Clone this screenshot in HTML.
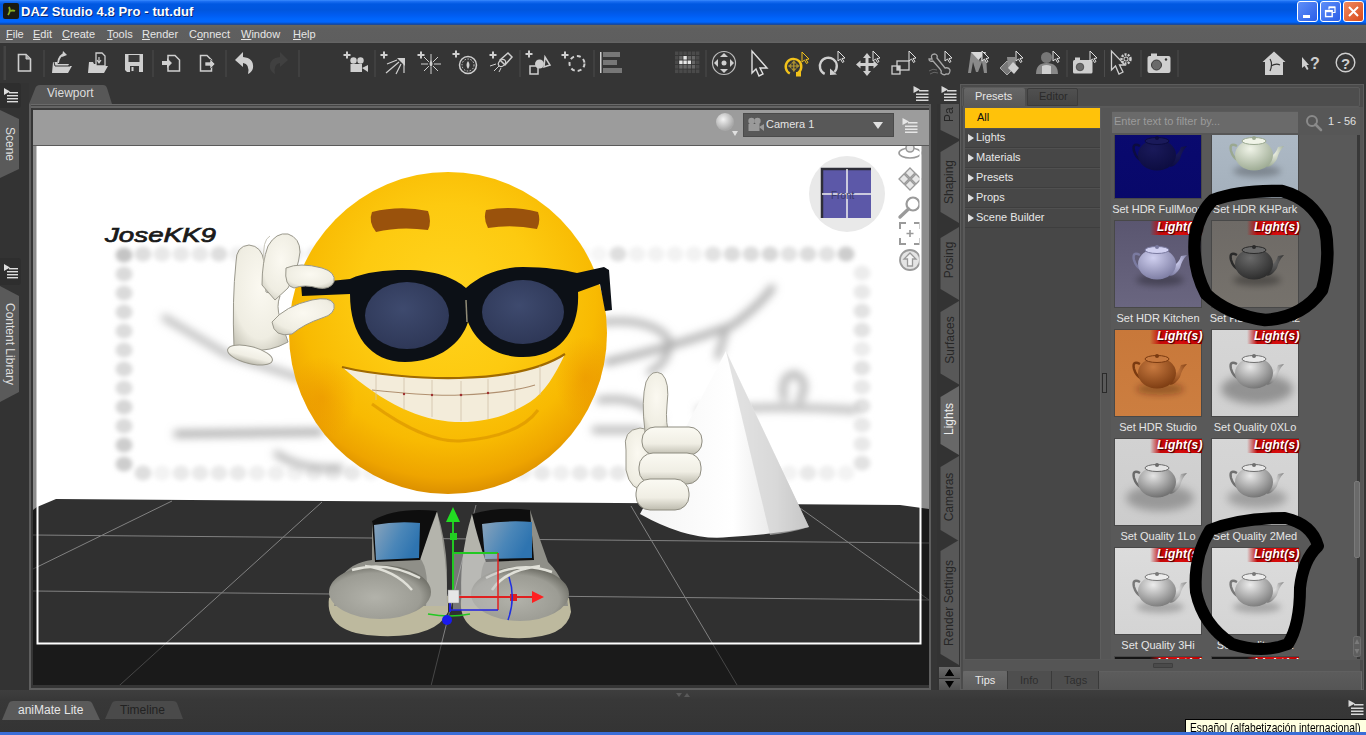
<!DOCTYPE html>
<html><head><meta charset="utf-8">
<style>
*{margin:0;padding:0;box-sizing:border-box}
html,body{width:1366px;height:735px;overflow:hidden;background:#353535;font-family:"Liberation Sans",sans-serif;position:relative}
.a{position:absolute}
#title{left:0;top:0;width:1366px;height:25px;background:linear-gradient(#3a8cff 0,#1a6ef2 1.5px,#0058e2 4px,#0056de 10px,#005cf0 15px,#0066fc 19px,#0066ff 22px,#0a4ab0 24px,#2a4a88 25px)}
#title .t{left:21px;top:4px;color:#fff;font-weight:bold;font-size:13px;letter-spacing:0.1px;text-shadow:1px 1px 0 #0a2a7a}
#menu{left:0;top:25px;width:1366px;height:18px;background:linear-gradient(#66665f,#5f5f5f 4px,#5e5e5e 16px,#666 18px)}
#menu span{position:absolute;top:3px;color:#e6e6e6;font-size:11px}
#menu span u{text-decoration:underline}
#tool{left:0;top:43px;width:1366px;height:40px;background:#353535}
.sep{position:absolute;top:51px;width:1px;height:26px;background:#4a4a4a}
.ic{position:absolute}
</style></head><body>
<div id="title" class="a">
  <svg class="a" style="left:3px;top:3px" width="16" height="16"><rect x="0" y="0" width="16" height="16" rx="2" fill="#1a1a14"/><path d="M6 4 Q8 8 5 12 M7 8 Q10 7 12 8" stroke="#8ab020" stroke-width="1.8" fill="none"/></svg>
  <div class="t a">DAZ Studio 4.8 Pro - tut.duf</div>
  <div class="a" style="left:1297px;top:1px;width:21px;height:21px;border:1px solid #fff;border-radius:3px;background:linear-gradient(135deg,#5f8ff8,#2a5ee8)"><div style="position:absolute;left:5px;top:13px;width:7px;height:3px;background:#fff"></div></div>
  <div class="a" style="left:1320px;top:1px;width:21px;height:21px;border:1px solid #fff;border-radius:3px;background:linear-gradient(135deg,#5f8ff8,#2a5ee8)"><svg width="19" height="19" style="position:absolute;left:0;top:0"><path d="M8 7.5 V5 H14 V10.5 H11.5" fill="none" stroke="#fff" stroke-width="1.2"/><rect x="8" y="4.6" width="6" height="1.6" fill="#fff"/><rect x="4.6" y="8.6" width="6.6" height="6" fill="none" stroke="#fff" stroke-width="1.4"/><rect x="4.6" y="8.4" width="6.6" height="1.8" fill="#fff"/></svg></div>
  <div class="a" style="left:1343px;top:1px;width:21px;height:21px;border:1px solid #fff;border-radius:3px;background:linear-gradient(135deg,#f08a60,#d84a1a)"><svg width="19" height="19" style="position:absolute;left:0;top:0"><path d="M5 5 L14 14 M14 5 L5 14" stroke="#fff" stroke-width="2"/></svg></div>
</div>
<div id="menu" class="a">
  <span style="left:6px"><u>F</u>ile</span><span style="left:33px"><u>E</u>dit</span><span style="left:62px"><u>C</u>reate</span><span style="left:107px"><u>T</u>ools</span><span style="left:142px"><u>R</u>ender</span><span style="left:189px">C<u>o</u>nnect</span><span style="left:241px"><u>W</u>indow</span><span style="left:293px"><u>H</u>elp</span>
</div>
<div id="tool" class="a"></div>
<svg class="a" style="left:0;top:43px" width="1366" height="40" viewBox="0 43 1366 40"><rect x="3.5" y="46" width="2.5" height="34" fill="#444"/><rect x="43.5" y="50" width="1" height="27" fill="#4c4c4c"/><rect x="152.5" y="50" width="1" height="27" fill="#4c4c4c"/><rect x="225.5" y="50" width="1" height="27" fill="#4c4c4c"/><rect x="298.5" y="50" width="1" height="27" fill="#4c4c4c"/><rect x="374.5" y="50" width="1" height="27" fill="#4c4c4c"/><rect x="519.5" y="50" width="1" height="27" fill="#4c4c4c"/><rect x="593.5" y="50" width="1" height="27" fill="#4c4c4c"/><rect x="705.5" y="50" width="1" height="27" fill="#4c4c4c"/><rect x="1066.5" y="50" width="1" height="27" fill="#4c4c4c"/><rect x="1104" y="50" width="1" height="27" fill="#4c4c4c"/><rect x="1140.5" y="50" width="1" height="27" fill="#4c4c4c"/><rect x="1177.5" y="50" width="1" height="27" fill="#4c4c4c"/><path d="M18.5 54.5 H26 L30.5 59 V71 H18.5Z" fill="none" stroke="#cfcfcf" stroke-width="1.6"/><path d="M26 54.5 V59 H30.5" fill="#aaa" stroke="#cfcfcf" stroke-width="1"/><path d="M52 73 L53 62 L57 62 L58 64 L69 64 L68 66 L72 66 L68 73Z" fill="#cfcfcf"/><path d="M54 62 L55 66 L70 66" fill="none" stroke="#333" stroke-width="1"/><path d="M58 63 Q59 55 65 54" fill="none" stroke="#cfcfcf" stroke-width="1.8"/><path d="M63 51 L67 55 L62 57Z" fill="#cfcfcf"/><path d="M88 73 L89 62 L93 62 L94 64 L105 64 L104 66 L108 66 L104 73Z" fill="#cfcfcf"/><path d="M96 53 H102 L105 56 V66 H96Z" fill="#333" stroke="#cfcfcf" stroke-width="1.3"/><path d="M99 57 L99 62 M97 60 L99 63 L101 60" stroke="#cfcfcf" stroke-width="1.2" fill="none"/><path d="M125 54 H143 V72 H127 L125 70Z" fill="#cfcfcf"/><rect x="128.5" y="55" width="11" height="7" fill="#3a3a3a"/><rect x="130" y="66" width="9" height="6" fill="#3a3a3a"/><rect x="131.5" y="67" width="2" height="4" fill="#cfcfcf"/><path d="M168 55.5 H175 L179.5 60 V71 H168Z" fill="none" stroke="#cfcfcf" stroke-width="1.5"/><path d="M162 61 H167 V58 L172 63 L167 68 V65 H162Z" fill="#cfcfcf"/><path d="M200.5 55.5 H207 L211.5 60 V71 H200.5Z" fill="none" stroke="#cfcfcf" stroke-width="1.5"/><path d="M205 62 H210 V59 L215 64 L210 69 V66 H205Z" fill="#cfcfcf" stroke="#333" stroke-width="0.6"/><path d="M235 60 L243 52 L243 57 Q254 58 253 68 Q252 72 248 74 Q250 64 243 63 L243 67Z" fill="#cfcfcf"/><path d="M288 60 L280 52 L280 57 Q269 58 270 68 Q271 72 275 74 Q273 64 280 63 L280 67Z" fill="#404040"/><path d="M343.5 55 H350.5 M347 51.5 V58.5" stroke="#cfcfcf" stroke-width="2"/><circle cx="353.5" cy="60.5" r="3.2" fill="#cfcfcf"/><circle cx="360.5" cy="60.5" r="3.2" fill="#cfcfcf"/><rect x="350.5" y="64" width="11.5" height="8" fill="#cfcfcf"/><path d="M362 68 L368 65 L368 72Z" fill="#cfcfcf"/><path d="M380.5 55 H387.5 M384 51.5 V58.5" stroke="#cfcfcf" stroke-width="2"/><path d="M397 58 L405 58 L405 66Z" fill="#cfcfcf"/><path d="M387 64 L397 60 M386 73 L399 62 M396 74 L401 64 M404 73 L404 64" stroke="#cfcfcf" stroke-width="1.2"/><path d="M417.5 55 H424.5 M421 51.5 V58.5" stroke="#cfcfcf" stroke-width="2"/><g stroke="#cfcfcf" stroke-width="1"><path d="M431 54 V74 M421 64 H441 M424 57 L438 71 M438 57 L424 71"/></g><circle cx="431" cy="64" r="3" fill="#333"/><path d="M431 60 Q434 64 431 67 Q428 64 431 60Z" fill="#cfcfcf"/><path d="M452.5 54 H459.5 M456 50.5 V57.5" stroke="#cfcfcf" stroke-width="2"/><circle cx="468" cy="65" r="8.5" fill="none" stroke="#cfcfcf" stroke-width="1.5"/><circle cx="468" cy="65" r="6" fill="none" stroke="#cfcfcf" stroke-width="1" stroke-dasharray="1.5 1.5"/><path d="M468 61 Q471 65 468 69 Q465 65 468 61Z" fill="#cfcfcf"/><path d="M489.5 55 H496.5 M493 51.5 V58.5" stroke="#cfcfcf" stroke-width="2"/><path d="M500 60 L508 53 L512 57 L505 65Z" fill="none" stroke="#cfcfcf" stroke-width="1.5"/><ellipse cx="502" cy="63" rx="3" ry="4" transform="rotate(45 502 63)" fill="none" stroke="#cfcfcf" stroke-width="1.2"/><path d="M494 71 L499 66 M490 66 L496 64 M499 72 L501 68" stroke="#cfcfcf" stroke-width="1"/><path d="M525.5 54 H532.5 M529 50.5 V57.5" stroke="#cfcfcf" stroke-width="2"/><rect x="530" y="66" width="8" height="8" fill="none" stroke="#cfcfcf" stroke-width="1.5"/><circle cx="539.5" cy="64" r="4.5" fill="#cfcfcf"/><path d="M545 57 L550 65 L544 67Z" fill="none" stroke="#cfcfcf" stroke-width="1.5"/><path d="M561.5 55 H568.5 M565 51.5 V58.5" stroke="#cfcfcf" stroke-width="2"/><circle cx="577" cy="63.5" r="7.5" fill="none" stroke="#cfcfcf" stroke-width="2" stroke-dasharray="4 3"/><rect x="600" y="52" width="1.5" height="21" fill="#cfcfcf"/><rect x="603" y="52" width="17" height="5" fill="#777"/><rect x="603" y="60" width="14" height="5" fill="#777"/><rect x="603" y="68" width="19" height="5" fill="#777"/><rect x="675.0" y="51.5" width="3.4" height="3.6" fill="#4a4a4a"/><rect x="679.2" y="51.5" width="3.4" height="3.6" fill="#4a4a4a"/><rect x="683.4" y="51.5" width="3.4" height="3.6" fill="#4a4a4a"/><rect x="687.6" y="51.5" width="3.4" height="3.6" fill="#4a4a4a"/><rect x="691.8" y="51.5" width="3.4" height="3.6" fill="#4a4a4a"/><rect x="696.0" y="51.5" width="3.4" height="3.6" fill="#4a4a4a"/><rect x="675.0" y="56.0" width="3.4" height="3.6" fill="#4a4a4a"/><rect x="679.2" y="56.0" width="3.4" height="3.6" fill="#666"/><rect x="683.4" y="56.0" width="3.4" height="3.6" fill="#e6e6e6"/><rect x="687.6" y="56.0" width="3.4" height="3.6" fill="#666"/><rect x="691.8" y="56.0" width="3.4" height="3.6" fill="#666"/><rect x="696.0" y="56.0" width="3.4" height="3.6" fill="#4a4a4a"/><rect x="675.0" y="60.5" width="3.4" height="3.6" fill="#4a4a4a"/><rect x="679.2" y="60.5" width="3.4" height="3.6" fill="#e6e6e6"/><rect x="683.4" y="60.5" width="3.4" height="3.6" fill="#e6e6e6"/><rect x="687.6" y="60.5" width="3.4" height="3.6" fill="#e6e6e6"/><rect x="691.8" y="60.5" width="3.4" height="3.6" fill="#666"/><rect x="696.0" y="60.5" width="3.4" height="3.6" fill="#4a4a4a"/><rect x="675.0" y="65.0" width="3.4" height="3.6" fill="#4a4a4a"/><rect x="679.2" y="65.0" width="3.4" height="3.6" fill="#666"/><rect x="683.4" y="65.0" width="3.4" height="3.6" fill="#666"/><rect x="687.6" y="65.0" width="3.4" height="3.6" fill="#666"/><rect x="691.8" y="65.0" width="3.4" height="3.6" fill="#666"/><rect x="696.0" y="65.0" width="3.4" height="3.6" fill="#4a4a4a"/><rect x="675.0" y="69.5" width="3.4" height="3.6" fill="#4a4a4a"/><rect x="679.2" y="69.5" width="3.4" height="3.6" fill="#4a4a4a"/><rect x="683.4" y="69.5" width="3.4" height="3.6" fill="#4a4a4a"/><rect x="687.6" y="69.5" width="3.4" height="3.6" fill="#4a4a4a"/><rect x="691.8" y="69.5" width="3.4" height="3.6" fill="#4a4a4a"/><rect x="696.0" y="69.5" width="3.4" height="3.6" fill="#4a4a4a"/><circle cx="724" cy="63" r="11.5" fill="none" stroke="#bdbdbd" stroke-width="1.2"/><path d="M724 53 L728 57 L720 57Z M724 73 L728 69 L720 69Z M714 63 L718 59 L718 67Z M734 63 L730 59 L730 67Z" fill="#cfcfcf"/><circle cx="724" cy="63" r="2.5" fill="#cfcfcf"/><path d="M752 51 L752 73 L756 69 L759 76 L763 74 L760 68 L767 68Z" fill="#333" stroke="#e0e0e0" stroke-width="1.4"/><path d="M789.8 73.5 A7.8 7.8 0 1 1 798 73" fill="none" stroke="#f2c21a" stroke-width="2.4"/><path d="M793.8 60.5 V71.5 M788.3 66 H799.3" stroke="#b89a30" stroke-width="1.2"/><path d="M791 63.5 L793.8 60.5 L796.6 63.5Z M791 68.5 L793.8 71.5 L796.6 68.5Z M791.3 63.2 L788.3 66 L791.3 68.8Z M796.3 63.2 L799.3 66 L796.3 68.8Z" fill="#a89030"/><rect x="796" y="72" width="5" height="4.5" fill="#f2c21a"/><path d="M802 52 L802 62 L804.5 60 L806.5 63.5 L808 62.5 L806 59.5 L809 59Z" fill="#333" stroke="#f2c21a" stroke-width="1"/><path d="M824.7 73.9 A8.5 8.5 0 1 1 834.5 72" fill="none" stroke="#cfcfcf" stroke-width="2.4"/><path d="M830 68.5 L837 74.5 L830 75Z" fill="#cfcfcf"/><path d="M838 51 L838 61 L840.5 59 L842.5 62.5 L844 61.5 L842 58.5 L845 58Z" fill="#333" stroke="#e0e0e0" stroke-width="1"/><path d="M867 53 L871 58 L868.5 58 L868.5 63 L873.5 63 L873.5 60.5 L878 64.5 L873.5 68.5 L873.5 66 L868.5 66 L868.5 71 L871 71 L867 76 L863 71 L865.5 71 L865.5 66 L860.5 66 L860.5 68.5 L856 64.5 L860.5 60.5 L860.5 63 L865.5 63 L865.5 58 L863 58Z" fill="#cfcfcf"/><path d="M873 51 L873 61 L875.5 59 L877.5 62.5 L879 61.5 L877 58.5 L880 58Z" fill="#333" stroke="#e0e0e0" stroke-width="1"/><rect x="892" y="66" width="8" height="8" fill="none" stroke="#cfcfcf" stroke-width="1.3"/><rect x="897" y="61" width="12" height="9" fill="none" stroke="#cfcfcf" stroke-width="1.3"/><rect x="897" y="66" width="3" height="4" fill="#cfcfcf"/><path d="M909 51 L909 61 L911.5 59 L913.5 62.5 L915 61.5 L913 58.5 L916 58Z" fill="#333" stroke="#e0e0e0" stroke-width="1"/><path d="M932 59 Q930 54 935 54 Q938 55 937 58 L945 68 Q949 67 950 70 Q950 75 946 74 Q944 76 941 73 Q942 71 940 69 L933 61 Q929 62 929 59Z" fill="none" stroke="#a8a8a8" stroke-width="1.3"/><path d="M929 71 Q933 68 937 70 M930 74 Q934 71 938 73" stroke="#666" stroke-width="1" fill="none"/><path d="M945 51 L945 61 L947.5 59 L949.5 62.5 L951 61.5 L949 58.5 L952 58Z" fill="#333" stroke="#e0e0e0" stroke-width="1"/><path d="M968 73 L971 52 L977 52 L980 62 L983 52 L986 52 L987 73 L984 73 L982 62 L978 72 L976 72 L973 62 L971 73Z" fill="#8a8a8a"/><path d="M971 52 L986 52 L978.5 60Z" fill="#d8d8d8"/><path d="M982 51 L982 61 L984.5 59 L986.5 62.5 L988 61.5 L986 58.5 L989 58Z" fill="#333" stroke="#e0e0e0" stroke-width="1"/><path d="M1000 68 L1007 61 L1014 68 L1007 75Z" fill="#777" stroke="#aaa" stroke-width="1"/><path d="M1007 57 H1015 L1016 66 L1008 68Z" fill="#8a8a8a"/><path d="M1013 62 L1019 68 L1014 74 L1008 68Z" fill="#cfcfcf"/><path d="M1016 51 L1016 61 L1018.5 59 L1020.5 62.5 L1022 61.5 L1020 58.5 L1023 58Z" fill="#333" stroke="#e0e0e0" stroke-width="1"/><circle cx="1046.5" cy="57.5" r="5.5" fill="#777"/><path d="M1036 74 Q1036 63 1046.5 63 Q1058 63 1058 74Z" fill="#888"/><path d="M1042 74 L1042 66 Q1046.5 64 1051 66 L1051 74Z" fill="#cfcfcf"/><path d="M1053 51 L1053 61 L1055.5 59 L1057.5 62.5 L1059 61.5 L1057 58.5 L1060 58Z" fill="#333" stroke="#e0e0e0" stroke-width="1"/><rect x="1073" y="60" width="19.5" height="13.5" rx="1.5" fill="#cfcfcf"/><rect x="1075" y="57.5" width="5" height="3" fill="#cfcfcf"/><circle cx="1080" cy="67" r="3.8" fill="#6a6a6a" stroke="#444" stroke-width="0.8"/><path d="M1090 51 L1090 61 L1092.5 59 L1094.5 62.5 L1096 61.5 L1094 58.5 L1097 58Z" fill="#333" stroke="#e0e0e0" stroke-width="1"/><path d="M1111.5 51 L1111.5 70 L1115.5 66 L1119 74 L1123 72 L1119.5 65 L1125 65Z" fill="#333" stroke="#cfcfcf" stroke-width="1.3"/><circle cx="1126" cy="59" r="4.5" fill="none" stroke="#cfcfcf" stroke-width="2.5" stroke-dasharray="2 1.2"/><circle cx="1126" cy="59" r="2.5" fill="#cfcfcf"/><circle cx="1126" cy="59" r="1.5" fill="#333"/><rect x="1147.5" y="56" width="23" height="17" rx="2" fill="#cfcfcf"/><rect x="1151" y="53.5" width="6" height="3.5" fill="#cfcfcf"/><circle cx="1156.5" cy="65" r="5" fill="#6a6a6a" stroke="#3a3a3a" stroke-width="1"/><circle cx="1166" cy="59.5" r="1.2" fill="#333"/><path d="M1274 51.5 L1285.5 62 L1283 62 L1283 75 L1265 75 L1265 62 L1262.5 62Z" fill="#cfcfcf"/><path d="M1270 59 Q1273 64 1270 71 M1271 66 Q1276 63 1280 65" stroke="#333" stroke-width="1.2" fill="none"/><path d="M1302 57 L1302 68 L1304.5 66 L1307 70 L1308.5 69 L1306.5 65 L1309 65Z" fill="#cfcfcf"/><text x="1310" y="69" font-family="Liberation Sans" font-weight="bold" font-size="16" fill="#cfcfcf">?</text><circle cx="1345.5" cy="62.5" r="9.3" fill="none" stroke="#cfcfcf" stroke-width="1.4"/><text x="1341" y="68.5" font-family="Liberation Sans" font-weight="bold" font-size="15" fill="#cfcfcf">?</text></svg>

<!-- left column -->
<div class="a" style="left:0;top:83px;width:29px;height:607px;background:#333"></div>
<div class="a" style="left:0;top:83px;width:21px;height:25px;background:#2e2e2e;border-radius:0 3px 3px 0"></div>
<svg class="a" style="left:3px;top:88px" width="16" height="15"><path d="M1 0 L7 3.5 L1 7Z" fill="#ddd"/><rect x="6" y="4" width="9" height="1.4" fill="#ddd"/><rect x="4" y="7" width="11" height="1.4" fill="#ddd"/><rect x="4" y="10" width="11" height="1.4" fill="#ddd"/><rect x="4" y="13" width="11" height="1.4" fill="#ddd"/></svg>
<svg class="a" style="left:0;top:108px" width="22" height="75"><path d="M0 2 L19 11 L19 61 L0 70Z" fill="#5a5a5a"/></svg>
<div class="a vt" style="left:1px;top:114px;width:18px;height:60px;color:#ddd;font-size:12px;writing-mode:vertical-rl;display:flex;align-items:center;justify-content:center">Scene</div>
<div class="a" style="left:0;top:258px;width:21px;height:27px;background:#2e2e2e;border-radius:0 3px 3px 0"></div>
<svg class="a" style="left:3px;top:264px" width="16" height="15"><path d="M1 0 L7 3.5 L1 7Z" fill="#ddd"/><rect x="6" y="4" width="9" height="1.4" fill="#ddd"/><rect x="4" y="7" width="11" height="1.4" fill="#ddd"/><rect x="4" y="10" width="11" height="1.4" fill="#ddd"/><rect x="4" y="13" width="11" height="1.4" fill="#ddd"/></svg>
<svg class="a" style="left:0;top:286px" width="22" height="118"><path d="M0 0 L19 10 L19 106 L0 116Z" fill="#5a5a5a"/></svg>
<div class="a" style="left:1px;top:296px;width:18px;height:96px;color:#ddd;font-size:12px;writing-mode:vertical-rl;display:flex;align-items:center;justify-content:center">Content Library</div>

<!-- viewport tab -->
<svg class="a" style="left:29px;top:84px" width="84" height="21"><path d="M0 20 L6 5 Q7 1 11 1 L74 1 Q77 1 78 4 L83 20Z" fill="#575757"/></svg>
<div class="a" style="left:47px;top:86px;color:#ddd;font-size:12px">Viewport</div>
<!-- viewport frame -->
<div class="a" style="left:29px;top:104px;width:902px;height:586px;background:#353535;border:2px solid #5e5e5e"></div>
<div class="a" style="left:31px;top:104px;width:898px;height:1px;background:#6a6a6a"></div><div class="a" style="left:31px;top:105px;width:898px;height:1px;background:#454545"></div><div class="a" style="left:31px;top:106px;width:898px;height:2px;background:#646464"></div><div class="a" style="left:33px;top:108px;width:896px;height:2px;background:#3a3a3a"></div>
<div class="a" style="left:33px;top:110px;width:896px;height:35px;background:#9c9c9c"></div><div class="a" style="left:33px;top:145px;width:896px;height:1px;background:#5a5a5a"></div>
<div class="a" style="left:33px;top:146px;width:896px;height:539px;background:#1b1b1b"></div>
<svg id="vp" class="a" style="left:33px;top:146px" width="896" height="539" viewBox="33 146 896 539">
<defs>
 <filter id="bl" x="-20%" y="-20%" width="140%" height="140%"><feGaussianBlur stdDeviation="4.2"/></filter><filter id="bld" x="-10%" y="-10%" width="120%" height="120%"><feGaussianBlur stdDeviation="2.2"/></filter>
 <filter id="bl2" x="-20%" y="-20%" width="140%" height="140%"><feGaussianBlur stdDeviation="1.5"/></filter>
 <radialGradient id="face" cx="0.5" cy="0.38" r="0.62">
  <stop offset="0" stop-color="#ffd41e"/><stop offset="0.45" stop-color="#fdca10"/><stop offset="0.75" stop-color="#f8ba02"/><stop offset="0.92" stop-color="#eea400"/><stop offset="1" stop-color="#dc9000"/>
 </radialGradient>
 <radialGradient id="cheek" cx="0.5" cy="0.5" r="0.5"><stop offset="0" stop-color="#e88a00" stop-opacity="0.45"/><stop offset="1" stop-color="#e88a00" stop-opacity="0"/></radialGradient>
 <radialGradient id="lens" cx="0.45" cy="0.4" r="0.7"><stop offset="0" stop-color="#3e4a6e"/><stop offset="1" stop-color="#2c3554"/></radialGradient>
 <linearGradient id="cone" x1="0" x2="1" y1="0" y2="0"><stop offset="0" stop-color="#f4f4f4"/><stop offset="0.55" stop-color="#ffffff"/><stop offset="0.8" stop-color="#e8e8e8"/><stop offset="1" stop-color="#b8b8b8"/></linearGradient>
 <radialGradient id="shoe" cx="0.45" cy="0.6" r="0.6"><stop offset="0" stop-color="#b2b2aa"/><stop offset="0.75" stop-color="#9c9c94"/><stop offset="1" stop-color="#6e6e66"/></radialGradient>
 <linearGradient id="blue" x1="0" x2="1" y1="0" y2="0.4"><stop offset="0" stop-color="#8aa4bc"/><stop offset="0.6" stop-color="#4a86b8"/><stop offset="1" stop-color="#2e74b0"/></linearGradient>
<radialGradient id="glv" cx="0.5" cy="0.4" r="0.7"><stop offset="0" stop-color="#fbf9f1"/><stop offset="0.7" stop-color="#efede2"/><stop offset="1" stop-color="#c9c7ba"/></radialGradient>
 <linearGradient id="glv2" x1="0" y1="0" x2="0" y2="1"><stop offset="0" stop-color="#fbfaf3"/><stop offset="0.6" stop-color="#f0eee4"/><stop offset="1" stop-color="#bdbbae"/></linearGradient>
<clipPath id="faceclip"><ellipse cx="448" cy="333" rx="159" ry="161"/></clipPath>
</defs>
<rect x="33" y="146" width="896" height="539" fill="#fff"/>
<!-- background blurred logo -->
<g filter="url(#bld)"><ellipse cx="124.0" cy="255.0" rx="8.5" ry="7.5" fill="#c4c4c4"/><ellipse cx="124.0" cy="274.0" rx="8.5" ry="7.5" fill="#dadada"/><ellipse cx="124.0" cy="293.0" rx="8.5" ry="7.5" fill="#dadada"/><ellipse cx="124.0" cy="312.0" rx="8.5" ry="7.5" fill="#dadada"/><ellipse cx="124.0" cy="331.0" rx="8.5" ry="7.5" fill="#dcdcdc"/><ellipse cx="124.0" cy="350.0" rx="8.5" ry="7.5" fill="#dcdcdc"/><ellipse cx="124.0" cy="369.0" rx="8.5" ry="7.5" fill="#dadada"/><ellipse cx="124.0" cy="388.0" rx="8.5" ry="7.5" fill="#dcdcdc"/><ellipse cx="124.0" cy="407.0" rx="8.5" ry="7.5" fill="#d6d6d6"/><ellipse cx="124.0" cy="426.0" rx="8.5" ry="7.5" fill="#dadada"/><ellipse cx="124.0" cy="445.0" rx="8.5" ry="7.5" fill="#cdcdcd"/><ellipse cx="124.0" cy="464.0" rx="8.5" ry="7.5" fill="#cdcdcd"/><ellipse cx="143.0" cy="254.0" rx="8.5" ry="7.5" fill="#dedede"/><ellipse cx="162.0" cy="254.0" rx="8.5" ry="7.5" fill="#e8e8e8"/><ellipse cx="181.0" cy="254.0" rx="8.5" ry="7.5" fill="#e8e8e8"/><ellipse cx="200.0" cy="254.0" rx="8.5" ry="7.5" fill="#e8e8e8"/><ellipse cx="219.0" cy="254.0" rx="8.5" ry="7.5" fill="#dedede"/><ellipse cx="238.0" cy="254.0" rx="8.5" ry="7.5" fill="#f0f0f0"/><ellipse cx="257.0" cy="254.0" rx="8.5" ry="7.5" fill="#f0f0f0"/><ellipse cx="276.0" cy="254.0" rx="8.5" ry="7.5" fill="#f0f0f0"/><ellipse cx="295.0" cy="254.0" rx="8.5" ry="7.5" fill="#f0f0f0"/><ellipse cx="314.0" cy="254.0" rx="8.5" ry="7.5" fill="#f0f0f0"/><ellipse cx="333.0" cy="254.0" rx="8.5" ry="7.5" fill="#f6f6f6"/><ellipse cx="352.0" cy="254.0" rx="8.5" ry="7.5" fill="#f6f6f6"/><ellipse cx="371.0" cy="254.0" rx="8.5" ry="7.5" fill="#f6f6f6"/><ellipse cx="390.0" cy="254.0" rx="8.5" ry="7.5" fill="#f6f6f6"/><ellipse cx="409.0" cy="254.0" rx="8.5" ry="7.5" fill="#f6f6f6"/><ellipse cx="428.0" cy="254.0" rx="8.5" ry="7.5" fill="#f6f6f6"/><ellipse cx="447.0" cy="254.0" rx="8.5" ry="7.5" fill="#f6f6f6"/><ellipse cx="466.0" cy="254.0" rx="8.5" ry="7.5" fill="#f6f6f6"/><ellipse cx="485.0" cy="254.0" rx="8.5" ry="7.5" fill="#f6f6f6"/><ellipse cx="504.0" cy="254.0" rx="8.5" ry="7.5" fill="#f6f6f6"/><ellipse cx="523.0" cy="254.0" rx="8.5" ry="7.5" fill="#f6f6f6"/><ellipse cx="542.0" cy="254.0" rx="8.5" ry="7.5" fill="#f6f6f6"/><ellipse cx="561.0" cy="254.0" rx="8.5" ry="7.5" fill="#f6f6f6"/><ellipse cx="580.0" cy="254.0" rx="8.5" ry="7.5" fill="#f6f6f6"/><ellipse cx="599.0" cy="254.0" rx="8.5" ry="7.5" fill="#f6f6f6"/><ellipse cx="618.0" cy="254.0" rx="8.5" ry="7.5" fill="#dedede"/><ellipse cx="637.0" cy="254.0" rx="8.5" ry="7.5" fill="#f2f2f2"/><ellipse cx="656.0" cy="254.0" rx="8.5" ry="7.5" fill="#f2f2f2"/><ellipse cx="675.0" cy="254.0" rx="8.5" ry="7.5" fill="#f2f2f2"/><ellipse cx="694.0" cy="254.0" rx="8.5" ry="7.5" fill="#f2f2f2"/><ellipse cx="713.0" cy="254.0" rx="8.5" ry="7.5" fill="#e2e2e2"/><ellipse cx="732.0" cy="254.0" rx="8.5" ry="7.5" fill="#dcdcdc"/><ellipse cx="751.0" cy="254.0" rx="8.5" ry="7.5" fill="#dcdcdc"/><ellipse cx="770.0" cy="254.0" rx="8.5" ry="7.5" fill="#d8d8d8"/><ellipse cx="789.0" cy="254.0" rx="8.5" ry="7.5" fill="#e2e2e2"/><ellipse cx="808.0" cy="254.0" rx="8.5" ry="7.5" fill="#dcdcdc"/><ellipse cx="827.0" cy="254.0" rx="8.5" ry="7.5" fill="#e2e2e2"/><ellipse cx="846.0" cy="254.0" rx="8.5" ry="7.5" fill="#cdcdcd"/><ellipse cx="862.0" cy="273.0" rx="8.5" ry="7.5" fill="#ececec"/><ellipse cx="862.0" cy="292.0" rx="8.5" ry="7.5" fill="#e8e8e8"/><ellipse cx="862.0" cy="311.0" rx="8.5" ry="7.5" fill="#e2e2e2"/><ellipse cx="862.0" cy="330.0" rx="8.5" ry="7.5" fill="#e2e2e2"/><ellipse cx="862.0" cy="349.0" rx="8.5" ry="7.5" fill="#ececec"/><ellipse cx="862.0" cy="368.0" rx="8.5" ry="7.5" fill="#e2e2e2"/><ellipse cx="862.0" cy="387.0" rx="8.5" ry="7.5" fill="#e8e8e8"/><ellipse cx="862.0" cy="406.0" rx="8.5" ry="7.5" fill="#e2e2e2"/><ellipse cx="862.0" cy="425.0" rx="8.5" ry="7.5" fill="#e8e8e8"/><ellipse cx="862.0" cy="444.0" rx="8.5" ry="7.5" fill="#e8e8e8"/><ellipse cx="862.0" cy="463.0" rx="8.5" ry="7.5" fill="#e2e2e2"/><ellipse cx="143.0" cy="473.0" rx="8.5" ry="7.5" fill="#dedede"/><ellipse cx="162.0" cy="473.0" rx="8.5" ry="7.5" fill="#f3f3f3"/><ellipse cx="181.0" cy="473.0" rx="8.5" ry="7.5" fill="#e9e9e9"/><ellipse cx="200.0" cy="473.0" rx="8.5" ry="7.5" fill="#e9e9e9"/><ellipse cx="219.0" cy="473.0" rx="8.5" ry="7.5" fill="#e9e9e9"/><ellipse cx="238.0" cy="473.0" rx="8.5" ry="7.5" fill="#e9e9e9"/><ellipse cx="257.0" cy="473.0" rx="8.5" ry="7.5" fill="#efefef"/><ellipse cx="276.0" cy="473.0" rx="8.5" ry="7.5" fill="#efefef"/><ellipse cx="295.0" cy="473.0" rx="8.5" ry="7.5" fill="#f3f3f3"/><ellipse cx="314.0" cy="473.0" rx="8.5" ry="7.5" fill="#efefef"/><ellipse cx="333.0" cy="473.0" rx="8.5" ry="7.5" fill="#efefef"/><ellipse cx="352.0" cy="473.0" rx="8.5" ry="7.5" fill="#e9e9e9"/><ellipse cx="371.0" cy="473.0" rx="8.5" ry="7.5" fill="#f3f3f3"/><ellipse cx="390.0" cy="473.0" rx="8.5" ry="7.5" fill="#f3f3f3"/><ellipse cx="409.0" cy="473.0" rx="8.5" ry="7.5" fill="#e9e9e9"/><ellipse cx="428.0" cy="473.0" rx="8.5" ry="7.5" fill="#f3f3f3"/><ellipse cx="447.0" cy="473.0" rx="8.5" ry="7.5" fill="#efefef"/><ellipse cx="466.0" cy="473.0" rx="8.5" ry="7.5" fill="#efefef"/><ellipse cx="485.0" cy="473.0" rx="8.5" ry="7.5" fill="#e9e9e9"/><ellipse cx="504.0" cy="473.0" rx="8.5" ry="7.5" fill="#efefef"/><ellipse cx="523.0" cy="473.0" rx="8.5" ry="7.5" fill="#efefef"/><ellipse cx="542.0" cy="473.0" rx="8.5" ry="7.5" fill="#e9e9e9"/><ellipse cx="561.0" cy="473.0" rx="8.5" ry="7.5" fill="#efefef"/><ellipse cx="580.0" cy="473.0" rx="8.5" ry="7.5" fill="#e9e9e9"/><ellipse cx="599.0" cy="473.0" rx="8.5" ry="7.5" fill="#e9e9e9"/><ellipse cx="618.0" cy="473.0" rx="8.5" ry="7.5" fill="#e9e9e9"/><ellipse cx="637.0" cy="473.0" rx="8.5" ry="7.5" fill="#f3f3f3"/><ellipse cx="656.0" cy="473.0" rx="8.5" ry="7.5" fill="#e9e9e9"/><ellipse cx="675.0" cy="473.0" rx="8.5" ry="7.5" fill="#e9e9e9"/><ellipse cx="694.0" cy="473.0" rx="8.5" ry="7.5" fill="#e9e9e9"/><ellipse cx="713.0" cy="473.0" rx="8.5" ry="7.5" fill="#efefef"/><ellipse cx="732.0" cy="473.0" rx="8.5" ry="7.5" fill="#efefef"/><ellipse cx="751.0" cy="473.0" rx="8.5" ry="7.5" fill="#e9e9e9"/><ellipse cx="770.0" cy="473.0" rx="8.5" ry="7.5" fill="#f3f3f3"/><ellipse cx="789.0" cy="473.0" rx="8.5" ry="7.5" fill="#f3f3f3"/><ellipse cx="808.0" cy="473.0" rx="8.5" ry="7.5" fill="#e9e9e9"/><ellipse cx="827.0" cy="473.0" rx="8.5" ry="7.5" fill="#efefef"/><ellipse cx="846.0" cy="473.0" rx="8.5" ry="7.5" fill="#f3f3f3"/></g>
<g filter="url(#bl)" fill="none" stroke="#b4b4b4" stroke-width="7" stroke-linecap="round">
 <path d="M165 318 L226 354 L300 378" stroke="#bcbcbc"/>
 <path d="M177 434 L320 432" stroke="#a8a8a8"/>
 <path d="M277 454 Q300 470 340 468"/>
 <path d="M604 322 Q650 318 668 338 Q672 360 650 372"/>
 <path d="M607 362 Q680 345 733 325 Q760 305 772 288" stroke="#aaaaaa"/>
 <path d="M726 330 L718 356"/>
 <path d="M784 398 Q780 375 795 374 Q810 380 800 400"/>
 <path d="M700 410 Q780 405 855 410" stroke="#b8b8b8"/>
 <path d="M600 400 Q640 395 660 420"/>
 <path d="M595 430 L640 430"/>
</g>
<text x="105" y="241.5" textLength="111" lengthAdjust="spacingAndGlyphs" font-family="Liberation Sans" font-style="italic" font-size="20" fill="#1a1a1a" stroke="#1a1a1a" stroke-width="0.7">JoseKK9</text>
<!-- floor -->
<path d="M33 510 L37 507 L56 499 L900 505 L929 509 L929 685 L33 685Z" fill="#303030"/>
<g stroke="#8a8a8a" stroke-width="1" fill="none" opacity="0.9">
 <path d="M33 535 L929 543"/>
 <path d="M33 591 L929 600"/>
 <path d="M33 569 L172 501"/>
 <path d="M110 694 L322 502"/>
 <path d="M476 505 L430 690"/>
 <path d="M631 506 L740 690"/>
 <path d="M800 508 L929 600"/>
</g>
<!-- face -->
<ellipse cx="448" cy="333" rx="159" ry="161" fill="url(#face)"/>
<g clip-path="url(#faceclip)"><ellipse cx="322" cy="398" rx="34" ry="42" fill="url(#cheek)"/><ellipse cx="585" cy="378" rx="30" ry="42" fill="url(#cheek)"/></g>
<path d="M372 212 Q400 205 428 211 Q432 222 428 230 Q400 226 376 232 Q368 222 372 212Z" fill="#9a520c"/>
<path d="M486 210 Q512 205 538 212 Q541 221 537 229 Q512 224 488 228 Q483 219 486 210Z" fill="#9a520c"/>
<!-- mouth -->
<path d="M342 367 C370 374 420 379 459 378 C500 377 540 370 565 354 C555 375 545 392 530 402 C505 418 480 423 455 422 C420 420 385 405 342 367Z" fill="#f3ecda"/>
<path d="M342 367 C370 374 420 379 459 378 C500 377 540 370 565 354" fill="none" stroke="#a06a00" stroke-width="2.2"/>
<path d="M372 390 C410 394 440 396 460 395 C490 394 515 391 535 385" fill="none" stroke="#b09070" stroke-width="1.2"/>
<g stroke="#cfc2a8" stroke-width="0.8"><path d="M376 375 V400 M404 378 V410 M432 380 V417 M461 381 V421 M488 379 V419 M515 375 V410 M540 366 V395"/></g><g fill="#a03030"><circle cx="404" cy="394" r="1.2"/><circle cx="432" cy="395" r="1.2"/><circle cx="461" cy="395" r="1.3"/><circle cx="488" cy="393" r="1.2"/></g>
<path d="M372 404 C410 432 440 442 460 441 C500 438 525 428 538 410" fill="none" stroke="#dc9600" stroke-width="3" opacity="0.7"/>
<!-- glasses -->
<path d="M301 284 L350 279 C365 272 385 270 405 270 C435 270 455 278 466 288 C480 275 500 267 523 267 C545 267 565 270 577 273 L604 267 L609 270 L612 310 L605 311 L600 284 L578 292 C580 330 560 357 523 357 C495 357 476 342 468 322 C462 342 440 362 405 362 C370 362 350 335 350 294 L302 296Z" fill="#0c1016"/>
<ellipse cx="407" cy="315.5" rx="42" ry="33.5" fill="url(#lens)"/>
<ellipse cx="523" cy="312" rx="41" ry="32" fill="url(#lens)"/>
<path d="M466 300 L467 322" stroke="#c8c0a0" stroke-width="1.5" opacity="0.7"/>
<path d="M726 351 L640 514 Q690 542 729 537 Q780 534 809 527Z" fill="url(#cone)"/>
<path d="M726 351 L809 527 Q790 533 770 535Z" fill="#cfcfcf" opacity="0.6"/>

<!-- left glove -->
<path d="M236 262 Q236 246 249 245 Q262 246 264 262 L266 292 L280 296 Q276 306 280 318 L288 342 Q270 352 252 350 L234 347 Q232 300 236 262Z" fill="url(#glv)" stroke="#9a988c" stroke-width="1"/>
<path d="M262 285 Q262 262 268 246 Q276 232 288 234 Q300 238 300 252 Q298 270 288 288 L275 300Z" fill="url(#glv)" stroke="#9a988c" stroke-width="1"/>
<path d="M286 268 Q300 262 322 268 Q336 272 334 282 Q330 290 318 288 Q305 284 294 288 Q284 286 286 268Z" fill="url(#glv)" stroke="#9a988c" stroke-width="1"/>
<path d="M272 322 Q285 306 312 300 Q330 296 334 304 Q336 314 322 318 Q304 324 292 334 Q274 338 272 322Z" fill="url(#glv)" stroke="#9a988c" stroke-width="1"/>
<path d="M264 262 Q262 240 270 236" fill="none" stroke="#c8c6ba" stroke-width="1"/>
<ellipse cx="250" cy="355" rx="23" ry="8.5" transform="rotate(14 250 355)" fill="url(#glv2)" stroke="#9a988c" stroke-width="1"/>
<!-- right glove -->
<path d="M626 450 Q622 430 640 428 L650 430 L648 490 Q630 492 626 470Z" fill="url(#glv)" stroke="#9a988c" stroke-width="1"/>
<path d="M645 432 Q641 400 646 382 Q652 368 662 374 Q670 382 667 405 Q665 425 670 435Z" fill="url(#glv)" stroke="#9a988c" stroke-width="1"/>
<rect x="642" y="427" width="60" height="28" rx="13" fill="url(#glv2)" stroke="#8e8c80" stroke-width="1"/>
<rect x="639" y="453" width="62" height="31" rx="14" fill="url(#glv2)" stroke="#8e8c80" stroke-width="1"/>
<rect x="636" y="479" width="53" height="31" rx="14" fill="url(#glv2)" stroke="#8e8c80" stroke-width="1"/>
<!-- left shoe -->
<path d="M329 598 Q324 634 380 636 Q436 638 448 612 L448 596 L332 596Z" fill="#bdb99e"/>
<path d="M372 521 L437 512 Q446 540 447 570 L447 606 L334 606 L340 578 Q352 562 372 560Z" fill="#8f8f88"/>
<path d="M437 512 Q448 560 447 606 L426 606 Q430 570 420 558Z" fill="#b4b4ac"/>
<ellipse cx="380" cy="592" rx="51" ry="27" fill="url(#shoe)"/>
<path d="M372 521 Q395 507 437 511 L430 530 L420 560 L375 562Z" fill="#0e0e0e"/>
<path d="M374 525 Q396 521 420 523 L419 558 L376 560Z" fill="url(#blue)"/>
<path d="M352 570 Q385 560 420 578 M365 566 Q395 570 412 590" stroke="#e0e0d8" stroke-width="2.5" fill="none"/>
<!-- right shoe -->
<path d="M461 600 Q458 636 512 638 Q566 640 571 612 L569 598 L462 598Z" fill="#bdb99e"/>
<path d="M472 514 L530 510 Q540 540 548 562 Q566 580 568 606 L462 606 Q460 570 470 540Z" fill="#8f8f88"/>
<path d="M472 514 Q458 560 462 606 L482 606 Q478 570 486 560Z" fill="#b4b4ac"/>
<ellipse cx="520" cy="594" rx="49" ry="27" fill="url(#shoe)"/>
<path d="M472 514 Q500 506 530 510 L534 560 L486 562 Q478 540 472 514Z" fill="#0e0e0e"/>
<path d="M482 524 Q508 520 532 522 L532 558 L485 559Z" fill="url(#blue)"/>
<path d="M486 578 Q520 560 552 572 M492 590 Q505 570 540 566" stroke="#e0e0d8" stroke-width="2.5" fill="none"/>
<!-- gizmo -->
<rect x="453" y="553" width="45" height="57" fill="#bdbdbd" opacity="0.5"/>
<path d="M453 553 H498" stroke="#22c822" stroke-width="2"/>
<path d="M498 553 V610" stroke="#e02020" stroke-width="1.5"/>
<path d="M450 610 H498" stroke="#2020e0" stroke-width="1.5"/>
<path d="M453 520 V590" stroke="#22c822" stroke-width="2"/>
<path d="M446 522 L453 507 L460 522Z" fill="#22dd22"/>
<rect x="450" y="533" width="7" height="7" fill="#22cc22"/>
<path d="M458 597 H533" stroke="#e02020" stroke-width="2"/>
<path d="M532 591 L544 597 L532 603Z" fill="#ff2020"/>
<rect x="510" y="594" width="7" height="7" fill="#e02020"/>
<path d="M509 577 Q516 598 508 620" stroke="#2030e0" stroke-width="1.5" fill="none"/>
<path d="M428 614 Q450 618 470 614" stroke="#22c822" stroke-width="1.5" fill="none"/>
<path d="M450 598 V612" stroke="#2020e0" stroke-width="2"/>
<circle cx="447" cy="620" r="5" fill="#1a1aee"/>
<rect x="448" y="590" width="11" height="13" fill="#e6e6e6" stroke="#888" stroke-width="0.5"/>


<!-- nav cube -->
<circle cx="847" cy="194" r="38" fill="#e9e9e9"/>
<rect x="822" y="169" width="49" height="49" fill="#5c58a8"/>
<path d="M822 218 V169 H871" stroke="#2e2e38" stroke-width="2.5" fill="none"/>
<path d="M847 169 V218 M822 194 H871" stroke="#f0f0f0" stroke-width="1.5"/>
<text x="831" y="199" font-size="10" fill="#3a3a6a" font-family="Liberation Sans">Front</text>
<!-- side icons -->
<g fill="#e8e8e8" stroke="#9a9a9a" stroke-width="1.6">
 <ellipse cx="910" cy="153" rx="11" ry="5" fill="none"/>
 <circle cx="910" cy="148" r="4"/>
 <path d="M910 168 L915 173 L910 178 L905 173Z M899 179 L904 174 L909 179 L904 184Z M921 179 L916 174 L911 179 L916 184Z M910 190 L915 185 L910 180 L905 185Z" stroke-width="1.3"/>
 <circle cx="913" cy="204" r="6.5" fill="none" stroke-width="2.2"/>
 <path d="M908.5 209 L900 217" stroke-width="3.4" stroke-linecap="round"/>
 <path d="M900 229 V223 H906 M914 223 H920 V229 M920 238 V244 H914 M906 244 H900 V238" fill="none" stroke-width="2"/>
 <path d="M910 230 V237 M906.5 233.5 H913.5" stroke-width="1.6"/>
 <circle cx="910" cy="260" r="10" fill="#e4e4e4" stroke-width="1.8"/>
 <path d="M910 253 L916 259 L912.5 259 L912.5 266 L907.5 266 L907.5 259 L904 259Z" fill="#f4f4f4" stroke-width="1.3"/>
</g>
<!-- dim outside render frame -->
<path d="M33 146 H929 V685 H33Z M37 146 V644 H921 V146Z" fill="rgba(0,0,0,0.45)" fill-rule="evenodd"/>
<path d="M37.5 146 V643.5 H920.5 V146" fill="none" stroke="#fff" stroke-width="2"/>
</svg>

<!-- right tab column -->
<div class="a" style="left:931px;top:83px;width:30px;height:607px;background:#353535"></div>
<div class="a" style="left:937px;top:104px;width:23px;height:586px;background:#333"></div>
<svg class="a" style="left:940px;top:104px" width="20" height="35"><path d="M0.5 0 L19 0 L19 35 L0.5 26Z" fill="#585858"/></svg><div class="a" style="left:940px;top:104px;width:19px;height:30px;overflow:hidden"><div style="position:absolute;left:1px;top:-42.5px;width:17px;height:60px;writing-mode:vertical-rl;transform:rotate(180deg);color:#262626;font-size:12px;line-height:17px;text-align:left">Pa</div></div><svg class="a" style="left:940px;top:141px" width="20" height="82"><path d="M0.5 11 L19 0 L19 82 L0.5 71Z" fill="#585858"/></svg><div class="a" style="left:940px;top:121.5px;width:19px;height:120px;display:flex;align-items:center;justify-content:center"><div style="transform:rotate(-90deg);white-space:nowrap;color:#262626;font-size:12px">Shaping</div></div><svg class="a" style="left:940px;top:227px" width="20" height="73"><path d="M0.5 11 L19 0 L19 73 L0.5 62Z" fill="#585858"/></svg><div class="a" style="left:940px;top:200.3px;width:19px;height:120px;display:flex;align-items:center;justify-content:center"><div style="transform:rotate(-90deg);white-space:nowrap;color:#262626;font-size:12px">Posing</div></div><svg class="a" style="left:940px;top:301px" width="20" height="83.5"><path d="M0.5 11 L19 0 L19 83.5 L0.5 72.5Z" fill="#585858"/></svg><div class="a" style="left:940px;top:279.6px;width:19px;height:120px;display:flex;align-items:center;justify-content:center"><div style="transform:rotate(-90deg);white-space:nowrap;color:#262626;font-size:12px">Surfaces</div></div><svg class="a" style="left:940px;top:386px" width="20" height="69"><path d="M0.5 11 L19 0 L19 69 L0.5 58Z" fill="#686868"/></svg><div class="a" style="left:940px;top:358.7px;width:19px;height:120px;display:flex;align-items:center;justify-content:center"><div style="transform:rotate(-90deg);white-space:nowrap;color:#ececec;font-size:12px">Lights</div></div><svg class="a" style="left:940px;top:456px" width="20" height="85"><path d="M0.5 11 L19 0 L19 85 L0.5 74Z" fill="#585858"/></svg><div class="a" style="left:940px;top:437px;width:19px;height:120px;display:flex;align-items:center;justify-content:center"><div style="transform:rotate(-90deg);white-space:nowrap;color:#262626;font-size:12px">Cameras</div></div><svg class="a" style="left:940px;top:540px" width="20" height="125"><path d="M0.5 11 L19 0 L19 125 L0.5 114Z" fill="#585858"/></svg><div class="a" style="left:940px;top:543px;width:19px;height:120px;display:flex;align-items:center;justify-content:center"><div style="transform:rotate(-90deg);white-space:nowrap;color:#262626;font-size:12px">Render Settings</div></div><svg class="a" style="left:941px;top:86px" width="16" height="15"><path d="M0.5 0 L7 3.5 L0.5 7Z" fill="#d8d8d8"/><rect x="6" y="4" width="9.5" height="1.5" fill="#d8d8d8"/><rect x="3" y="7.5" width="12.5" height="1.5" fill="#d8d8d8"/><rect x="3" y="10.5" width="12.5" height="1.5" fill="#d8d8d8"/><rect x="3" y="13.5" width="12.5" height="1.5" fill="#d8d8d8"/></svg><svg class="a" style="left:913px;top:86px" width="16" height="15"><path d="M0.5 0 L7 3.5 L0.5 7Z" fill="#d8d8d8"/><rect x="6" y="4" width="9.5" height="1.5" fill="#d8d8d8"/><rect x="3" y="7.5" width="12.5" height="1.5" fill="#d8d8d8"/><rect x="3" y="10.5" width="12.5" height="1.5" fill="#d8d8d8"/><rect x="3" y="13.5" width="12.5" height="1.5" fill="#d8d8d8"/></svg>
<div class="a" style="left:939px;top:667px;width:21px;height:11px;background:linear-gradient(#6a6a6a,#555)"></div>
<svg class="a" style="left:939px;top:667px" width="21" height="23"><path d="M10.5 2 L15 9 L6 9Z" fill="#000"/><path d="M10.5 21 L15 14 L6 14Z" fill="#000"/></svg>
<div class="a" style="left:939px;top:679px;width:21px;height:11px;background:linear-gradient(#626262,#505050)"></div>
<svg class="a" style="left:939px;top:667px" width="21" height="23"><path d="M10.5 2 L15 9 L6 9Z" fill="#000"/><path d="M10.5 21 L15 14 L6 14Z" fill="#000"/></svg>



<svg class="a" style="left:714px;top:112px" width="28" height="26"><defs><radialGradient id="sph" cx="0.4" cy="0.35" r="0.6"><stop offset="0" stop-color="#f4f4f4"/><stop offset="1" stop-color="#a8a8a8"/></radialGradient></defs><circle cx="11" cy="10" r="9" fill="url(#sph)"/><path d="M18 19 L24 19 L21 24Z" fill="#e0e0e0"/></svg>
<div class="a" style="left:743px;top:113px;width:151px;height:24px;background:#585858;border:1px solid #4a4a4a"></div>
<svg class="a" style="left:747px;top:117px" width="18" height="15"><circle cx="4.5" cy="4" r="3.2" fill="#9a9a9a"/><circle cx="10.5" cy="4" r="3.2" fill="#9a9a9a"/><rect x="1.5" y="7" width="11" height="7" fill="#9a9a9a"/><path d="M12 10 L17 7 L17 14Z" fill="#9a9a9a"/></svg>
<div class="a" style="left:766px;top:118px;color:#e4e4e4;font-size:11px">Camera 1</div>
<svg class="a" style="left:872px;top:121px" width="12" height="9"><path d="M1 1 L11 1 L6 8Z" fill="#e0e0e0"/></svg>
<svg class="a" style="left:902px;top:118px" width="16" height="15"><path d="M0.5 0 L7 3.5 L0.5 7Z" fill="#e6e6e6"/><rect x="6" y="4" width="9.5" height="1.5" fill="#e6e6e6"/><rect x="3" y="7.5" width="12.5" height="1.5" fill="#e6e6e6"/><rect x="3" y="10.5" width="12.5" height="1.5" fill="#e6e6e6"/><rect x="3" y="13.5" width="12.5" height="1.5" fill="#e6e6e6"/></svg><!-- right panel -->
<div class="a" style="left:960px;top:84px;width:404px;height:606px;background:#4b4b4b;border:1px solid #5c5c5c"></div>
<div class="a" style="left:962px;top:87px;width:398px;height:20px;background:#4d4d4d;border:1px solid #5a5a5a;border-radius:2px"></div>
<div class="a" style="left:964px;top:88px;width:61px;height:19px;background:linear-gradient(#666,#585858);border-radius:2px 2px 0 0"></div>
<div class="a" style="left:975px;top:90px;color:#e6e6e6;font-size:11px">Presets</div>
<div class="a" style="left:1027px;top:88px;width:51px;height:18px;background:linear-gradient(#505050,#454545);border:1px solid #3c3c3c;border-radius:2px 2px 0 0"></div>
<div class="a" style="left:1039px;top:90px;color:#2a2a2a;font-size:11px">Editor</div>
<div class="a" style="left:963px;top:107px;width:397px;height:553px;background:#595959"></div>
<div class="a" style="left:965px;top:108px;width:135px;height:551px;background:#474747"></div>
<div class="a" style="left:965px;top:108px;width:135px;height:20px;background:#ffc20a"></div>
<div class="a" style="left:977px;top:111px;color:#111;font-size:11px">All</div>
<div class="a" style="left:965px;top:128px;width:135px;height:20px;border-bottom:1px solid #3e3e3e;border-top:1px solid #505050"></div><svg class="a" style="left:967px;top:133px" width="8" height="10"><path d="M1 1 L7 5 L1 9Z" fill="#e0e0e0"/></svg><div class="a" style="left:976px;top:131px;color:#e8e8e8;font-size:11px">Lights</div><div class="a" style="left:965px;top:148px;width:135px;height:20px;border-bottom:1px solid #3e3e3e;border-top:1px solid #505050"></div><svg class="a" style="left:967px;top:153px" width="8" height="10"><path d="M1 1 L7 5 L1 9Z" fill="#e0e0e0"/></svg><div class="a" style="left:976px;top:151px;color:#e8e8e8;font-size:11px">Materials</div><div class="a" style="left:965px;top:168px;width:135px;height:20px;border-bottom:1px solid #3e3e3e;border-top:1px solid #505050"></div><svg class="a" style="left:967px;top:173px" width="8" height="10"><path d="M1 1 L7 5 L1 9Z" fill="#e0e0e0"/></svg><div class="a" style="left:976px;top:171px;color:#e8e8e8;font-size:11px">Presets</div><div class="a" style="left:965px;top:188px;width:135px;height:20px;border-bottom:1px solid #3e3e3e;border-top:1px solid #505050"></div><svg class="a" style="left:967px;top:193px" width="8" height="10"><path d="M1 1 L7 5 L1 9Z" fill="#e0e0e0"/></svg><div class="a" style="left:976px;top:191px;color:#e8e8e8;font-size:11px">Props</div><div class="a" style="left:965px;top:208px;width:135px;height:20px;border-bottom:1px solid #3e3e3e;border-top:1px solid #505050"></div><svg class="a" style="left:967px;top:213px" width="8" height="10"><path d="M1 1 L7 5 L1 9Z" fill="#e0e0e0"/></svg><div class="a" style="left:976px;top:211px;color:#e8e8e8;font-size:11px">Scene Builder</div>
<div class="a" style="left:1100px;top:108px;width:13px;height:551px;background:#565656;border-left:1px solid #5e5e5e"></div>
<div class="a" style="left:1102px;top:373px;width:5px;height:20px;border:1px solid #2a2a2a;background:#5a5a5a"></div>
<div class="a" style="left:1110px;top:108px;width:250px;height:28px;background:#575757"></div>
<div class="a" style="left:1112px;top:111px;width:186px;height:22px;background:#6a6a6a;border-top:1px solid #5a5a5a"></div>
<div class="a" style="left:1114px;top:115px;color:#9a9a9a;font-size:11px">Enter text to filter by...</div>
<svg class="a" style="left:1305px;top:114px" width="18" height="18"><circle cx="7" cy="7" r="5" fill="none" stroke="#8a8a8a" stroke-width="2"/><path d="M10.5 10.5 L16 16" stroke="#8a8a8a" stroke-width="2.6" stroke-linecap="round"/></svg>
<div class="a" style="left:1328px;top:115px;color:#e0e0e0;font-size:11px">1 - 56</div>
<div class="a" style="left:1111px;top:135px;width:249px;height:524px;background:#595959;overflow:hidden" id="grid"><div class="a" style="left:3px;top:-24px;width:88px;height:88px;background:linear-gradient(#0a0a70,#08086a);border:1px solid #484848"></div><svg class="a" style="left:3px;top:-24px" width="88" height="88" viewBox="0 0 88 88">
<defs><radialGradient id="tp0" cx="0.4" cy="0.3" r="0.75"><stop offset="0" stop-color="#1a1a5a"/><stop offset="1" stop-color="#0c0c40"/></radialGradient>
<filter id="tf0" x="-50%" y="-50%" width="200%" height="200%"><feGaussianBlur stdDeviation="3"/></filter></defs>
<ellipse cx="46" cy="60" rx="24" ry="6" fill="none" filter="url(#tf0)"/>
<path d="M26 35 Q18 31 20 40 Q22 47 28 50" fill="none" stroke="#0c0c40" stroke-width="2.5"/>
<path d="M59 46 Q65 43 67 36 L73 35 Q68 40 66 48 Q62 55 56 56Z" fill="url(#tp0)"/>
<ellipse cx="43" cy="44" rx="19" ry="15.5" fill="url(#tp0)"/>
<ellipse cx="43" cy="30" rx="12" ry="3.5" fill="#1a1a5a" stroke="#0c0c40" stroke-width="1"/>
<circle cx="43" cy="27" r="2" fill="#0c0c40"/>
</svg><div class="a" style="left:1px;top:68px;width:92px;text-align:center;white-space:nowrap;overflow:hidden;color:#e6e6e6;font-size:11px">Set HDR FullMoon</div><div class="a" style="left:100px;top:-24px;width:88px;height:88px;background:linear-gradient(#b0bcc8,#a4b0bc);border:1px solid #484848"></div><svg class="a" style="left:100px;top:-24px" width="88" height="88" viewBox="0 0 88 88">
<defs><radialGradient id="tp1" cx="0.4" cy="0.3" r="0.75"><stop offset="0" stop-color="#f0f4e8"/><stop offset="1" stop-color="#9aa890"/></radialGradient>
<filter id="tf1" x="-50%" y="-50%" width="200%" height="200%"><feGaussianBlur stdDeviation="3"/></filter></defs>
<ellipse cx="46" cy="60" rx="24" ry="6" fill="rgba(0,0,0,0.25)" filter="url(#tf1)"/>
<path d="M26 35 Q18 31 20 40 Q22 47 28 50" fill="none" stroke="#9aa890" stroke-width="2.5"/>
<path d="M59 46 Q65 43 67 36 L73 35 Q68 40 66 48 Q62 55 56 56Z" fill="url(#tp1)"/>
<ellipse cx="43" cy="44" rx="19" ry="15.5" fill="url(#tp1)"/>
<ellipse cx="43" cy="30" rx="12" ry="3.5" fill="#f0f4e8" stroke="#9aa890" stroke-width="1"/>
<circle cx="43" cy="27" r="2" fill="#9aa890"/>
</svg><div class="a" style="left:98px;top:68px;width:92px;text-align:center;white-space:nowrap;overflow:hidden;color:#e6e6e6;font-size:11px">Set HDR KHPark</div><div class="a" style="left:3px;top:85px;width:88px;height:88px;background:linear-gradient(#5a5670,#6a6680);border:1px solid #484848"></div><svg class="a" style="left:3px;top:85px" width="88" height="88" viewBox="0 0 88 88">
<defs><radialGradient id="tp2" cx="0.4" cy="0.3" r="0.75"><stop offset="0" stop-color="#d0d0f0"/><stop offset="1" stop-color="#7a7aa0"/></radialGradient>
<filter id="tf2" x="-50%" y="-50%" width="200%" height="200%"><feGaussianBlur stdDeviation="3"/></filter></defs>
<ellipse cx="46" cy="60" rx="24" ry="6" fill="rgba(0,0,0,0.3)" filter="url(#tf2)"/>
<path d="M26 35 Q18 31 20 40 Q22 47 28 50" fill="none" stroke="#7a7aa0" stroke-width="2.5"/>
<path d="M59 46 Q65 43 67 36 L73 35 Q68 40 66 48 Q62 55 56 56Z" fill="url(#tp2)"/>
<ellipse cx="43" cy="44" rx="19" ry="15.5" fill="url(#tp2)"/>
<ellipse cx="43" cy="30" rx="12" ry="3.5" fill="#d0d0f0" stroke="#7a7aa0" stroke-width="1"/>
<circle cx="43" cy="27" r="2" fill="#7a7aa0"/>
</svg><div class="a" style="left:39px;top:86px;width:52px;height:14px;background:linear-gradient(90deg,rgba(190,0,0,0),#c40808 20%,#d80c0c 60%,#b80000 100%)"></div><div class="a" style="left:46px;top:85px;color:#fff;font-size:12px;font-weight:bold;font-style:italic;text-shadow:1px 1px 1px #300;letter-spacing:0.2px">Light(s)</div><div class="a" style="left:1px;top:177px;width:92px;text-align:center;white-space:nowrap;overflow:hidden;color:#e6e6e6;font-size:11px">Set HDR Kitchen</div><div class="a" style="left:100px;top:85px;width:88px;height:88px;background:linear-gradient(#6e6a66,#76726c);border:1px solid #484848"></div><svg class="a" style="left:100px;top:85px" width="88" height="88" viewBox="0 0 88 88">
<defs><radialGradient id="tp3" cx="0.4" cy="0.3" r="0.75"><stop offset="0" stop-color="#6a6a6a"/><stop offset="1" stop-color="#2a2a2a"/></radialGradient>
<filter id="tf3" x="-50%" y="-50%" width="200%" height="200%"><feGaussianBlur stdDeviation="3"/></filter></defs>
<ellipse cx="46" cy="60" rx="24" ry="6" fill="rgba(0,0,0,0.3)" filter="url(#tf3)"/>
<path d="M26 35 Q18 31 20 40 Q22 47 28 50" fill="none" stroke="#2a2a2a" stroke-width="2.5"/>
<path d="M59 46 Q65 43 67 36 L73 35 Q68 40 66 48 Q62 55 56 56Z" fill="url(#tp3)"/>
<ellipse cx="43" cy="44" rx="19" ry="15.5" fill="url(#tp3)"/>
<ellipse cx="43" cy="30" rx="12" ry="3.5" fill="#6a6a6a" stroke="#2a2a2a" stroke-width="1"/>
<circle cx="43" cy="27" r="2" fill="#2a2a2a"/>
</svg><div class="a" style="left:136px;top:86px;width:52px;height:14px;background:linear-gradient(90deg,rgba(190,0,0,0),#c40808 20%,#d80c0c 60%,#b80000 100%)"></div><div class="a" style="left:143px;top:85px;color:#fff;font-size:12px;font-weight:bold;font-style:italic;text-shadow:1px 1px 1px #300;letter-spacing:0.2px">Light(s)</div><div class="a" style="left:98px;top:177px;width:92px;text-align:center;white-space:nowrap;overflow:hidden;color:#e6e6e6;font-size:11px">Set HDR KHPark2</div><div class="a" style="left:3px;top:194px;width:88px;height:88px;background:linear-gradient(#c8783a,#cc7e40);border:1px solid #484848"></div><svg class="a" style="left:3px;top:194px" width="88" height="88" viewBox="0 0 88 88">
<defs><radialGradient id="tp4" cx="0.4" cy="0.3" r="0.75"><stop offset="0" stop-color="#c87a40"/><stop offset="1" stop-color="#7a3a10"/></radialGradient>
<filter id="tf4" x="-50%" y="-50%" width="200%" height="200%"><feGaussianBlur stdDeviation="3"/></filter></defs>
<ellipse cx="46" cy="60" rx="24" ry="6" fill="rgba(60,20,0,0.35)" filter="url(#tf4)"/>
<path d="M26 35 Q18 31 20 40 Q22 47 28 50" fill="none" stroke="#7a3a10" stroke-width="2.5"/>
<path d="M59 46 Q65 43 67 36 L73 35 Q68 40 66 48 Q62 55 56 56Z" fill="url(#tp4)"/>
<ellipse cx="43" cy="44" rx="19" ry="15.5" fill="url(#tp4)"/>
<ellipse cx="43" cy="30" rx="12" ry="3.5" fill="#c87a40" stroke="#7a3a10" stroke-width="1"/>
<circle cx="43" cy="27" r="2" fill="#7a3a10"/>
</svg><div class="a" style="left:39px;top:195px;width:52px;height:14px;background:linear-gradient(90deg,rgba(190,0,0,0),#c40808 20%,#d80c0c 60%,#b80000 100%)"></div><div class="a" style="left:46px;top:194px;color:#fff;font-size:12px;font-weight:bold;font-style:italic;text-shadow:1px 1px 1px #300;letter-spacing:0.2px">Light(s)</div><div class="a" style="left:1px;top:286px;width:92px;text-align:center;white-space:nowrap;overflow:hidden;color:#e6e6e6;font-size:11px">Set HDR Studio</div><div class="a" style="left:100px;top:194px;width:88px;height:88px;background:linear-gradient(#d6d6d6,#d0d0d0);border:1px solid #484848"></div><svg class="a" style="left:100px;top:194px" width="88" height="88" viewBox="0 0 88 88">
<defs><radialGradient id="tp5" cx="0.4" cy="0.3" r="0.75"><stop offset="0" stop-color="#e8e8e8"/><stop offset="1" stop-color="#707070"/></radialGradient>
<filter id="tf5" x="-50%" y="-50%" width="200%" height="200%"><feGaussianBlur stdDeviation="4"/></filter></defs>
<ellipse cx="46" cy="60" rx="36" ry="15" fill="rgba(0,0,0,0.3)" filter="url(#tf5)"/>
<path d="M26 35 Q18 31 20 40 Q22 47 28 50" fill="none" stroke="#707070" stroke-width="2.5"/>
<path d="M59 46 Q65 43 67 36 L73 35 Q68 40 66 48 Q62 55 56 56Z" fill="url(#tp5)"/>
<ellipse cx="43" cy="44" rx="19" ry="15.5" fill="url(#tp5)"/>
<ellipse cx="43" cy="30" rx="12" ry="3.5" fill="#e8e8e8" stroke="#707070" stroke-width="1"/>
<circle cx="43" cy="27" r="2" fill="#707070"/>
</svg><div class="a" style="left:136px;top:195px;width:52px;height:14px;background:linear-gradient(90deg,rgba(190,0,0,0),#c40808 20%,#d80c0c 60%,#b80000 100%)"></div><div class="a" style="left:143px;top:194px;color:#fff;font-size:12px;font-weight:bold;font-style:italic;text-shadow:1px 1px 1px #300;letter-spacing:0.2px">Light(s)</div><div class="a" style="left:98px;top:286px;width:92px;text-align:center;white-space:nowrap;overflow:hidden;color:#e6e6e6;font-size:11px">Set Quality 0XLo</div><div class="a" style="left:3px;top:303px;width:88px;height:88px;background:linear-gradient(#d2d2d2,#cccccc);border:1px solid #484848"></div><svg class="a" style="left:3px;top:303px" width="88" height="88" viewBox="0 0 88 88">
<defs><radialGradient id="tp6" cx="0.4" cy="0.3" r="0.75"><stop offset="0" stop-color="#e4e4e4"/><stop offset="1" stop-color="#6a6a6a"/></radialGradient>
<filter id="tf6" x="-50%" y="-50%" width="200%" height="200%"><feGaussianBlur stdDeviation="4"/></filter></defs>
<ellipse cx="46" cy="60" rx="34" ry="13" fill="rgba(0,0,0,0.26)" filter="url(#tf6)"/>
<path d="M26 35 Q18 31 20 40 Q22 47 28 50" fill="none" stroke="#6a6a6a" stroke-width="2.5"/>
<path d="M59 46 Q65 43 67 36 L73 35 Q68 40 66 48 Q62 55 56 56Z" fill="url(#tp6)"/>
<ellipse cx="43" cy="44" rx="19" ry="15.5" fill="url(#tp6)"/>
<ellipse cx="43" cy="30" rx="12" ry="3.5" fill="#e4e4e4" stroke="#6a6a6a" stroke-width="1"/>
<circle cx="43" cy="27" r="2" fill="#6a6a6a"/>
</svg><div class="a" style="left:39px;top:304px;width:52px;height:14px;background:linear-gradient(90deg,rgba(190,0,0,0),#c40808 20%,#d80c0c 60%,#b80000 100%)"></div><div class="a" style="left:46px;top:303px;color:#fff;font-size:12px;font-weight:bold;font-style:italic;text-shadow:1px 1px 1px #300;letter-spacing:0.2px">Light(s)</div><div class="a" style="left:1px;top:395px;width:92px;text-align:center;white-space:nowrap;overflow:hidden;color:#e6e6e6;font-size:11px">Set Quality 1Lo</div><div class="a" style="left:100px;top:303px;width:88px;height:88px;background:linear-gradient(#d6d6d6,#d0d0d0);border:1px solid #484848"></div><svg class="a" style="left:100px;top:303px" width="88" height="88" viewBox="0 0 88 88">
<defs><radialGradient id="tp7" cx="0.4" cy="0.3" r="0.75"><stop offset="0" stop-color="#e8e8e8"/><stop offset="1" stop-color="#707070"/></radialGradient>
<filter id="tf7" x="-50%" y="-50%" width="200%" height="200%"><feGaussianBlur stdDeviation="4"/></filter></defs>
<ellipse cx="46" cy="60" rx="30" ry="10" fill="rgba(0,0,0,0.24)" filter="url(#tf7)"/>
<path d="M26 35 Q18 31 20 40 Q22 47 28 50" fill="none" stroke="#707070" stroke-width="2.5"/>
<path d="M59 46 Q65 43 67 36 L73 35 Q68 40 66 48 Q62 55 56 56Z" fill="url(#tp7)"/>
<ellipse cx="43" cy="44" rx="19" ry="15.5" fill="url(#tp7)"/>
<ellipse cx="43" cy="30" rx="12" ry="3.5" fill="#e8e8e8" stroke="#707070" stroke-width="1"/>
<circle cx="43" cy="27" r="2" fill="#707070"/>
</svg><div class="a" style="left:136px;top:304px;width:52px;height:14px;background:linear-gradient(90deg,rgba(190,0,0,0),#c40808 20%,#d80c0c 60%,#b80000 100%)"></div><div class="a" style="left:143px;top:303px;color:#fff;font-size:12px;font-weight:bold;font-style:italic;text-shadow:1px 1px 1px #300;letter-spacing:0.2px">Light(s)</div><div class="a" style="left:98px;top:395px;width:92px;text-align:center;white-space:nowrap;overflow:hidden;color:#e6e6e6;font-size:11px">Set Quality 2Med</div><div class="a" style="left:3px;top:412px;width:88px;height:88px;background:linear-gradient(#dcdcdc,#d4d4d4);border:1px solid #484848"></div><svg class="a" style="left:3px;top:412px" width="88" height="88" viewBox="0 0 88 88">
<defs><radialGradient id="tp8" cx="0.4" cy="0.3" r="0.75"><stop offset="0" stop-color="#ececec"/><stop offset="1" stop-color="#787878"/></radialGradient>
<filter id="tf8" x="-50%" y="-50%" width="200%" height="200%"><feGaussianBlur stdDeviation="3"/></filter></defs>
<ellipse cx="46" cy="60" rx="24" ry="6" fill="rgba(0,0,0,0.22)" filter="url(#tf8)"/>
<path d="M26 35 Q18 31 20 40 Q22 47 28 50" fill="none" stroke="#787878" stroke-width="2.5"/>
<path d="M59 46 Q65 43 67 36 L73 35 Q68 40 66 48 Q62 55 56 56Z" fill="url(#tp8)"/>
<ellipse cx="43" cy="44" rx="19" ry="15.5" fill="url(#tp8)"/>
<ellipse cx="43" cy="30" rx="12" ry="3.5" fill="#ececec" stroke="#787878" stroke-width="1"/>
<circle cx="43" cy="27" r="2" fill="#787878"/>
</svg><div class="a" style="left:39px;top:413px;width:52px;height:14px;background:linear-gradient(90deg,rgba(190,0,0,0),#c40808 20%,#d80c0c 60%,#b80000 100%)"></div><div class="a" style="left:46px;top:412px;color:#fff;font-size:12px;font-weight:bold;font-style:italic;text-shadow:1px 1px 1px #300;letter-spacing:0.2px">Light(s)</div><div class="a" style="left:1px;top:504px;width:92px;text-align:center;white-space:nowrap;overflow:hidden;color:#e6e6e6;font-size:11px">Set Quality 3Hi</div><div class="a" style="left:100px;top:412px;width:88px;height:88px;background:linear-gradient(#dcdcdc,#d4d4d4);border:1px solid #484848"></div><svg class="a" style="left:100px;top:412px" width="88" height="88" viewBox="0 0 88 88">
<defs><radialGradient id="tp9" cx="0.4" cy="0.3" r="0.75"><stop offset="0" stop-color="#ececec"/><stop offset="1" stop-color="#787878"/></radialGradient>
<filter id="tf9" x="-50%" y="-50%" width="200%" height="200%"><feGaussianBlur stdDeviation="3"/></filter></defs>
<ellipse cx="46" cy="60" rx="24" ry="6" fill="rgba(0,0,0,0.22)" filter="url(#tf9)"/>
<path d="M26 35 Q18 31 20 40 Q22 47 28 50" fill="none" stroke="#787878" stroke-width="2.5"/>
<path d="M59 46 Q65 43 67 36 L73 35 Q68 40 66 48 Q62 55 56 56Z" fill="url(#tp9)"/>
<ellipse cx="43" cy="44" rx="19" ry="15.5" fill="url(#tp9)"/>
<ellipse cx="43" cy="30" rx="12" ry="3.5" fill="#ececec" stroke="#787878" stroke-width="1"/>
<circle cx="43" cy="27" r="2" fill="#787878"/>
</svg><div class="a" style="left:136px;top:413px;width:52px;height:14px;background:linear-gradient(90deg,rgba(190,0,0,0),#c40808 20%,#d80c0c 60%,#b80000 100%)"></div><div class="a" style="left:143px;top:412px;color:#fff;font-size:12px;font-weight:bold;font-style:italic;text-shadow:1px 1px 1px #300;letter-spacing:0.2px">Light(s)</div><div class="a" style="left:98px;top:504px;width:92px;text-align:center;white-space:nowrap;overflow:hidden;color:#e6e6e6;font-size:11px">Set Quality 4Ult</div><div class="a" style="left:3px;top:521px;width:88px;height:88px;background:#151515;border:1px solid #484848"></div><div class="a" style="left:39px;top:522px;width:52px;height:14px;background:linear-gradient(90deg,rgba(190,0,0,0),#c40808 20%,#d80c0c 60%,#b80000 100%)"></div><div class="a" style="left:46px;top:521px;color:#fff;font-size:12px;font-weight:bold;font-style:italic;text-shadow:1px 1px 1px #300;letter-spacing:0.2px">Light(s)</div><div class="a" style="left:100px;top:521px;width:88px;height:88px;background:#151515;border:1px solid #484848"></div><div class="a" style="left:136px;top:522px;width:52px;height:14px;background:linear-gradient(90deg,rgba(190,0,0,0),#c40808 20%,#d80c0c 60%,#b80000 100%)"></div><div class="a" style="left:143px;top:521px;color:#fff;font-size:12px;font-weight:bold;font-style:italic;text-shadow:1px 1px 1px #300;letter-spacing:0.2px">Light(s)</div></div>
<div class="a" style="left:1357px;top:135px;width:3px;height:524px;background:#383838"></div><div class="a" style="left:1360px;top:107px;width:3px;height:553px;background:#555"></div>
<div class="a" style="left:1354px;top:481px;width:6px;height:77px;background:#6a6a6a;border:1px solid #7a7a7a;border-radius:2px"></div><svg class="a" style="left:1353px;top:636px" width="8" height="21"><rect x="0.5" y="0.5" width="7" height="20" rx="2" fill="#5e5e5e" stroke="#6e6e6e"/><path d="M1.5 8 L4 3 L6.5 8Z M1.5 13 L4 18 L6.5 13Z" fill="#7a7a7a"/></svg>
<div class="a" style="left:963px;top:660px;width:397px;height:30px;background:#555"></div><div class="a" style="left:1153px;top:663px;width:20px;height:5px;background:#4a4a4a;border:1px solid #3e3e3e;border-radius:1px"></div><div class="a" style="left:963px;top:671px;width:399px;height:19px;background:linear-gradient(#5c5c5c,#555);border-top:1px solid #606060;border-right:1px solid #6a6a6a"></div>
<div class="a" style="left:963px;top:671px;width:44px;height:19px;background:linear-gradient(#6a6a6a,#5c5c5c);border-radius:2px 2px 0 0"></div>
<div class="a" style="left:975px;top:674px;color:#e8e8e8;font-size:11px">Tips</div>
<div class="a" style="left:1007px;top:671px;width:45px;height:18px;background:#4e4e4e;border-left:1px solid #3a3a3a;border-right:1px solid #3a3a3a"></div>
<div class="a" style="left:1020px;top:674px;color:#2e2e2e;font-size:11px">Info</div>
<div class="a" style="left:1052px;top:671px;width:47px;height:18px;background:#4e4e4e;border-right:1px solid #3a3a3a"></div>
<div class="a" style="left:1064px;top:674px;color:#2e2e2e;font-size:11px">Tags</div>


<!-- bottom -->
<div class="a" style="left:0;top:690px;width:1366px;height:42px;background:linear-gradient(#3e3e3e,#383838 10px,#343434)"></div>
<svg class="a" style="left:0;top:699px" width="200" height="23"><path d="M2 21 L9 4 Q10 2 13 2 L88 2 Q91 2 92 4 L100 21Z" fill="#5a5a5a"/><path d="M105 20 L112 4 Q113 2 116 2 L173 2 Q176 2 177 4 L183 20Z" fill="#4a4a4a"/></svg>
<div class="a" style="left:18px;top:703px;color:#e6e6e6;font-size:12px">aniMate Lite</div>
<div class="a" style="left:120px;top:703px;color:#222;font-size:12px">Timeline</div>
<svg class="a" style="left:674px;top:692px" width="20" height="7"><path d="M2 1 L8 1 L5 5Z" fill="#5a5a5a"/><path d="M10 5 L16 5 L13 1Z" fill="#5a5a5a"/></svg>
<svg class="a" style="left:1348px;top:700px" width="16" height="15"><path d="M0.5 0 L7 3.5 L0.5 7Z" fill="#d8d8d8"/><rect x="6" y="4" width="9.5" height="1.5" fill="#d8d8d8"/><rect x="3" y="7.5" width="12.5" height="1.5" fill="#d8d8d8"/><rect x="3" y="10.5" width="12.5" height="1.5" fill="#d8d8d8"/><rect x="3" y="13.5" width="12.5" height="1.5" fill="#d8d8d8"/></svg>
<div class="a" style="left:1185px;top:719px;width:181px;height:14px;background:#ffffe1;border:1px solid #000;border-right:none;border-bottom:none;overflow:hidden"><div style="position:absolute;left:4px;top:0px;font-size:13px;color:#000;white-space:nowrap;transform:scaleX(0.79);transform-origin:0 0">Español (alfabetización internacional)</div></div>
<div class="a" style="left:0;top:732px;width:1366px;height:3px;background:#3a6ed8"></div>


<svg class="a" style="left:1100px;top:170px" width="266" height="500" viewBox="1100 170 266 500">
<path d="M1213 200 Q1240 190 1282 191 Q1312 199 1325 228 Q1331 258 1322 290 Q1302 318 1265 320 Q1228 315 1206 294 Q1192 268 1195 236 Q1200 212 1213 200Z" fill="none" stroke="#000" stroke-width="12.5" stroke-linejoin="round"/>
<path d="M1210 530 Q1240 518 1285 518 Q1312 524 1318 546 Q1303 560 1300 588 Q1300 625 1288 644 Q1262 654 1232 644 Q1203 625 1196 592 Q1193 558 1210 530Z" fill="none" stroke="#000" stroke-width="12" stroke-linejoin="round"/>
</svg>
</body></html>
